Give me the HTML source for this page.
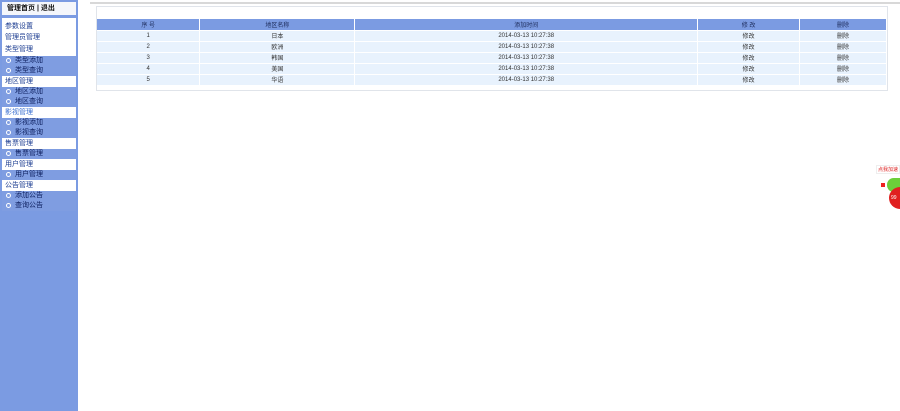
<!DOCTYPE html>
<html><head><meta charset="utf-8"><style>
*{margin:0;padding:0;box-sizing:border-box}
body{width:900px;height:411px;overflow:hidden;background:#fff;font-family:"Liberation Sans","Noto Sans CJK SC",sans-serif;font-size:7px;color:#333;position:relative}
#side{position:absolute;left:0;top:0;width:78px;height:411px;background:#7b9be2}
#top{position:absolute;left:2px;top:2px;width:74px;height:13px;background:#f4f6fb;font-size:7px;font-weight:bold;color:#111;padding-left:5px;line-height:13px}
.w{position:absolute;left:2px;width:74px;background:#fff}
.t{position:absolute;left:5px;font-size:7px;color:#1c3d91;line-height:10px}
.s{position:absolute;left:2px;width:74px;height:10px;line-height:10px;color:#0d1f5e;font-size:7px;padding-left:4px;background:#7f9de1}
.s:before{content:"";display:inline-block;width:3px;height:3px;border:1px solid #fff;border-radius:50%;margin-right:4px;vertical-align:middle}
#box{position:absolute;left:96px;top:6px;width:792px;height:85px;border:1px solid #e0e4ea}
#hl{position:absolute;left:90px;top:2px;width:810px;height:2px;background:#d8d8d8}
table{position:absolute;left:97px;top:19px;width:790px;border-collapse:collapse}
td,th{height:11px;font-size:6px;text-align:center;font-weight:normal;border-right:1px solid #fff;border-bottom:1px solid #fff;color:#333}
th{background:#7b9be2;color:#1c2b5a}
td{background:#e8f2fd}
</style></head><body>
<div id="hl"></div>
<div id="side">
<div id="top">管理首页 | 退出</div>
<div class="w" style="top:18px;height:38px"></div>
<div class="t" style="top:22px">参数设置</div>
<div class="t" style="top:33px">管理员管理</div>
<div class="t" style="top:45px">类型管理</div>
<div class="s" style="top:56px">类型添加</div>
<div class="s" style="top:66px">类型查询</div>
<div class="w" style="top:76px;height:11px"></div>
<div class="t" style="top:77px">地区管理</div>
<div class="s" style="top:87px">地区添加</div>
<div class="s" style="top:97px">地区查询</div>
<div class="w" style="top:107px;height:11px"></div>
<div class="t" style="top:108px;color:#3a6fd0">影视管理</div>
<div class="s" style="top:118px">影视添加</div>
<div class="s" style="top:128px">影视查询</div>
<div class="w" style="top:138px;height:11px"></div>
<div class="t" style="top:139px">售票管理</div>
<div class="s" style="top:149px">售票管理</div>
<div class="w" style="top:159px;height:11px"></div>
<div class="t" style="top:160px">用户管理</div>
<div class="s" style="top:170px">用户管理</div>
<div class="w" style="top:180px;height:11px"></div>
<div class="t" style="top:181px">公告管理</div>
<div class="s" style="top:191px">添加公告</div>
<div class="s" style="top:201px">查询公告</div>
</div>
<div id="box"></div>
<table>
<colgroup><col style="width:103px"><col style="width:155px"><col style="width:343px"><col style="width:102px"><col style="width:87px"></colgroup>
<tr><th>序 号</th><th>地区名称</th><th>添加时间</th><th>修 改</th><th>删除</th></tr>
<tr><td>1</td><td>日本</td><td>2014-03-13 10:27:38</td><td>修改</td><td>删除</td></tr>
<tr><td>2</td><td>欧洲</td><td>2014-03-13 10:27:38</td><td>修改</td><td>删除</td></tr>
<tr><td>3</td><td>韩国</td><td>2014-03-13 10:27:38</td><td>修改</td><td>删除</td></tr>
<tr><td>4</td><td>美国</td><td>2014-03-13 10:27:38</td><td>修改</td><td>删除</td></tr>
<tr><td>5</td><td>华语</td><td>2014-03-13 10:27:38</td><td>修改</td><td>删除</td></tr>
</table>
<div style="position:absolute;left:876px;top:165px;width:24px;height:9px;background:#fff;border:1px solid #eee;color:#d22;font-size:5px;line-height:8px;text-align:center">点我加速</div>
<div style="position:absolute;left:887px;top:178px;width:13px;height:14px;background:#6ccf3a;border-radius:50% 0 0 50%"></div>
<div style="position:absolute;left:881px;top:183px;width:4px;height:4px;background:#e22"></div>
<div style="position:absolute;left:889px;top:187px;width:11px;height:22px;background:#e02020;border-radius:11px 0 0 11px;color:#fff;font-size:5px;line-height:22px;padding-left:2px">99</div>
</body></html>
